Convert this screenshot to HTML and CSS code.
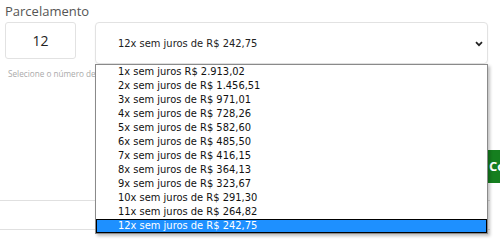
FILE: index.html
```html
<!DOCTYPE html>
<html lang="pt-BR">
<head>
<meta charset="utf-8">
<link rel="stylesheet" href="styles.css">
</head>
<body>
<div class="page">
  <div class="label">Parcelamento</div>
  <div class="fields">
    <div class="qty">12</div>
    <div class="select">
      <span class="select-text">12x sem juros de R$ 242,75</span>
      <svg class="chev" width="8" height="6" viewBox="0 0 8 6"><path d="M1 1.2l3 3 3-3" fill="none" stroke="#222" stroke-width="1.7"/></svg>
    </div>
  </div>
  <div class="help">Selecione o número de</div>
  <div class="actions"><div class="btn">Continuar</div></div>
  <div class="rule rule-a"></div>
  <div class="rule rule-b"></div>

  <ul class="dropdown">
    <li>1x sem juros R$ 2.913,02</li>
    <li>2x sem juros de R$ 1.456,51</li>
    <li>3x sem juros de R$ 971,01</li>
    <li>4x sem juros de R$ 728,26</li>
    <li>5x sem juros de R$ 582,60</li>
    <li>6x sem juros de R$ 485,50</li>
    <li>7x sem juros de R$ 416,15</li>
    <li>8x sem juros de R$ 364,13</li>
    <li>9x sem juros de R$ 323,67</li>
    <li>10x sem juros de R$ 291,30</li>
    <li>11x sem juros de R$ 264,82</li>
    <li class="sel">12x sem juros de R$ 242,75</li>
  </ul>
</div>
</body>
</html>
```
FILE: styles.css
```css
html, body {
  margin: 0;
  padding: 0;
  background: #fff;
  overflow: hidden;
  width: 500px;
  height: 242px;
}
.page {
  position: relative;
  width: 500px;
  height: 242px;
  font-family: "Open Sans", sans-serif;
  color: #555;
}
.label {
  padding: 1px 0 0 5px;
  height: 21px;
  font-size: 13px;
  line-height: 20px;
  color: #555;
}
.fields {
  display: flex;
  gap: 19px;
  padding-left: 5px;
}
.qty {
  box-sizing: border-box;
  width: 71px;
  height: 37px;
  border: 1px solid #e2e2e2;
  border-radius: 3px;
  display: flex;
  align-items: center;
  justify-content: center;
  font-size: 14px;
  color: #222;
}
.select {
  box-sizing: border-box;
  width: 393px;
  height: 42px;
  border: 1px solid #e2e2e2;
  border-radius: 4px;
  box-shadow: 0 1px 2px rgba(0,0,0,0.06);
  display: flex;
  align-items: center;
  padding-left: 22px;
  padding-right: 4px;
}
.select-text {
  flex: 1;
  font-family: "DejaVu Sans Condensed", "DejaVu Sans", sans-serif;
  font-stretch: condensed;
  font-size: 11px;
  color: #222;
  white-space: nowrap;
}
.chev { margin-top: 2px; }
.help {
  padding: 4px 0 0 8px;
  font-size: 8.2px;
  line-height: 12px;
  color: #aaa;
  white-space: nowrap;
}
.actions {
  display: flex;
  justify-content: flex-end;
  margin-top: 70px;
  margin-right: -90px;
}
.btn {
  background: #157f1f;
  color: #fff;
  font-weight: 700;
  font-size: 13px;
  width: 104px;
  height: 33px;
  line-height: 33px;
  padding-left: 3px;
  box-sizing: border-box;
}
.rule {
  height: 1px;
  background: #e0e0e0;
  width: 490px;
}
.rule-a { margin-top: 17px; }
.rule-b { margin-top: 28px; }
.dropdown {
  position: absolute;
  left: 95px;
  top: 64px;
  width: 393px;
  box-sizing: border-box;
  margin: 0;
  padding: 0;
  list-style: none;
  background: #fff;
  border: 1px solid #8a8a8a;
  box-shadow: 2px 2px 3px rgba(0,0,0,0.25);
  font-family: "DejaVu Sans Condensed", "DejaVu Sans", sans-serif;
  font-stretch: condensed;
  font-size: 11px;
  color: #111;
}
.dropdown li {
  height: 14px;
  line-height: 14px;
  padding-left: 22px;
  white-space: nowrap;
}
.dropdown li.sel {
  background: #1e90ff;
  color: #fff;
  box-sizing: border-box;
  outline: 1px solid #000;
  outline-offset: -1px;
}
```
